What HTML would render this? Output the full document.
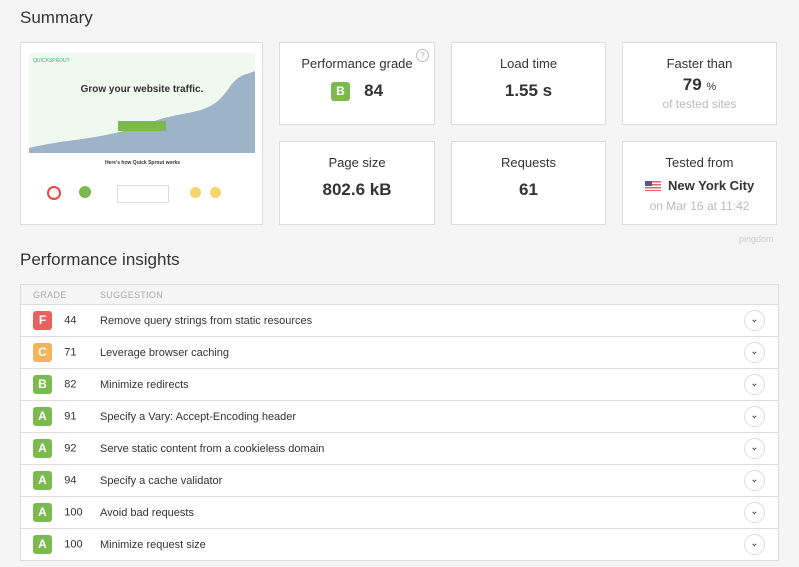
<!DOCTYPE html><html><head><style>
body{margin:0;width:799px;height:567px;background:#f5f5f5;font-family:"Liberation Sans",sans-serif;color:#333;position:relative;overflow:hidden}
.a{position:absolute}
h2{position:absolute;margin:0;font-weight:normal;font-size:17px;color:#333}
.card{position:absolute;background:#fff;border:1px solid #ddd;box-sizing:border-box;text-align:center}
.t{font-size:13px;color:#333;margin-top:13px}
.v{font-size:17px;font-weight:bold;color:#333;margin-top:10px}
.g{display:inline-block;width:19px;height:19px;border-radius:3px;color:#fff;font-weight:bold;font-size:12px;line-height:19px;text-align:center;vertical-align:middle}
.F{background:#e8615e}.C{background:#f2b45d}.B,.A{background:#7cb94f}
table{position:absolute;left:20px;top:284px;width:759px;border-collapse:collapse;table-layout:fixed;background:#fff;border:1px solid #ddd;font-size:11px}
th,td{padding:0}
th{background:#f5f5f5;color:#aaa;font-weight:normal;font-size:9px;text-align:left;height:19px;border-bottom:1px solid #ddd;letter-spacing:.3px}
td{height:31px;border-bottom:1px solid #ddd;color:#333}
.ch{width:21px;height:21px;border:1px solid #ddd;border-radius:50%;display:inline-block;box-sizing:border-box;text-align:center;font-size:10px;line-height:17px;vertical-align:middle}
</style></head><body>
<h2 style="left:20px;top:8px">Summary</h2>
<div class="card" style="left:20px;top:42px;width:243px;height:183px;padding:0">
<div class="a" style="left:8px;top:10px;width:226px;height:100px;background:#f0f9ee;overflow:hidden">
<svg width="226" height="100" class="a" style="left:0;top:0"><path d="M0 100 L0 95 C40 85 70 88 120 70 C160 55 180 65 200 35 C210 20 218 22 226 18 L226 100Z" fill="#9cb3c8"/></svg>
<div class="a" style="left:4px;top:5px;font-size:5px;color:#4a8">QUICKSPROUT</div>
<div class="a" style="left:0;width:226px;top:31px;text-align:center;font-weight:bold;font-size:10px;color:#333">Grow your website traffic.</div>
<div class="a" style="left:89px;top:68px;width:48px;height:10px;background:#7cb94f"></div>
</div>
<div class="a" style="left:0;width:243px;top:117px;font-size:5px;font-weight:bold">Here's how Quick Sprout works</div>
<div class="a" style="left:26px;top:143px;width:10px;height:10px;border-radius:50%;border:2px solid #e44"></div>
<div class="a" style="left:58px;top:143px;width:12px;height:12px;border-radius:50%;background:#7cb94f"></div>
<div class="a" style="left:96px;top:142px;width:50px;height:16px;border:1px solid #ddd"></div>
<div class="a" style="left:169px;top:144px;width:11px;height:11px;border-radius:50%;background:#f6d66b"></div>
<div class="a" style="left:189px;top:144px;width:11px;height:11px;border-radius:50%;background:#f6d66b"></div>
</div>
<div class="card" style="left:279px;top:42px;width:156px;height:83px"><div class="t">Performance grade</div><div class="v"><span class="g B">B</span>&nbsp;&nbsp;&nbsp;84</div>
<div class="a" style="left:136px;top:6px;width:11px;height:11px;border:1px solid #bbb;border-radius:50%;font-size:8px;color:#aaa;line-height:11px">?</div></div>
<div class="card" style="left:451px;top:42px;width:155px;height:83px"><div class="t">Load time</div><div class="v">1.55 s</div></div>
<div class="card" style="left:622px;top:42px;width:155px;height:83px"><div class="t">Faster than</div><div class="v" style="margin-top:4px">79 <span style="font-size:11px;font-weight:normal">%</span></div><div style="font-size:12px;color:#bbb;margin-top:2px">of tested sites</div></div>
<div class="card" style="left:279px;top:141px;width:156px;height:84px"><div class="t">Page size</div><div class="v">802.6 kB</div></div>
<div class="card" style="left:451px;top:141px;width:155px;height:84px"><div class="t">Requests</div><div class="v">61</div></div>
<div class="card" style="left:622px;top:141px;width:155px;height:84px"><div class="t">Tested from</div><div style="font-size:13px;font-weight:bold;margin-top:8px"><span style="display:inline-block;width:16px;height:10px;background:repeating-linear-gradient(#d66 0 1.5px,#fff 1.5px 3px);vertical-align:-1px;position:relative"><span style="position:absolute;left:0;top:0;width:7px;height:5px;background:#558"></span></span>&nbsp; New York City</div><div style="font-size:12px;color:#bbb;margin-top:6px">on Mar 16 at 11:42</div></div>
<div class="a" style="left:739px;top:234px;font-size:9px;color:#ccc">pingdom</div>
<h2 style="left:20px;top:250px">Performance insights</h2>
<table>
<tr><th style="width:12px"></th><th style="width:67px">GRADE</th><th>SUGGESTION</th><th style="width:34px"></th></tr>
<tr><td></td><td><span class="g F">F</span>&nbsp;&nbsp;&nbsp;&nbsp;44</td><td>Remove query strings from static resources</td><td><span class="ch">⌄</span></td></tr>
<tr><td></td><td><span class="g C">C</span>&nbsp;&nbsp;&nbsp;&nbsp;71</td><td>Leverage browser caching</td><td><span class="ch">⌄</span></td></tr>
<tr><td></td><td><span class="g B">B</span>&nbsp;&nbsp;&nbsp;&nbsp;82</td><td>Minimize redirects</td><td><span class="ch">⌄</span></td></tr>
<tr><td></td><td><span class="g A">A</span>&nbsp;&nbsp;&nbsp;&nbsp;91</td><td>Specify a Vary: Accept-Encoding header</td><td><span class="ch">⌄</span></td></tr>
<tr><td></td><td><span class="g A">A</span>&nbsp;&nbsp;&nbsp;&nbsp;92</td><td>Serve static content from a cookieless domain</td><td><span class="ch">⌄</span></td></tr>
<tr><td></td><td><span class="g A">A</span>&nbsp;&nbsp;&nbsp;&nbsp;94</td><td>Specify a cache validator</td><td><span class="ch">⌄</span></td></tr>
<tr><td></td><td><span class="g A">A</span>&nbsp;&nbsp;&nbsp;&nbsp;100</td><td>Avoid bad requests</td><td><span class="ch">⌄</span></td></tr>
<tr><td></td><td><span class="g A">A</span>&nbsp;&nbsp;&nbsp;&nbsp;100</td><td>Minimize request size</td><td><span class="ch">⌄</span></td></tr>
</table>
</body></html>
